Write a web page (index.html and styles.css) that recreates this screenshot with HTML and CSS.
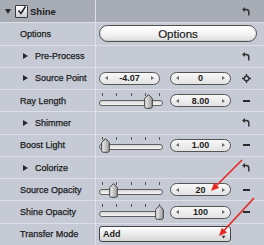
FILE: index.html
```html
<!DOCTYPE html>
<html>
<head>
<meta charset="utf-8">
<link rel="stylesheet" href="styles.css">
</head>
<body>
<div class="panel">
  <div class="row header">
    <div class="label">
      <span class="tri-down"></span>
      <span class="checkbox"><svg width="10" height="10" viewBox="0 0 10 10"><path d="M1.5 4.5 L4 7.5 L8.5 0.5" fill="none" stroke="#222" stroke-width="1.6"/></svg></span>
      <span class="title">Shine</span>
    </div>
    <div class="value"><div class="ctrl"></div><div class="icon"><svg class="reset" width="8" height="9" viewBox="0 0 8 9"><path d="M0 2.5 L3 0 L3 5 Z" fill="#333"/><path d="M2.5 2.5 H4.3 Q6.8 2.5 6.8 5 V8.5" fill="none" stroke="#333" stroke-width="1.5"/></svg></div></div>
  </div>

  <div class="row">
    <div class="label">Options</div>
    <div class="value"><button class="pill-btn">Options</button></div>
  </div>

  <div class="row">
    <div class="label"><span class="tri-right"></span>Pre-Process</div>
    <div class="value"><div class="ctrl"></div><div class="icon"><svg class="reset" width="8" height="9" viewBox="0 0 8 9"><path d="M0 2.5 L3 0 L3 5 Z" fill="#333"/><path d="M2.5 2.5 H4.3 Q6.8 2.5 6.8 5 V8.5" fill="none" stroke="#333" stroke-width="1.5"/></svg></div></div>
  </div>

  <div class="row">
    <div class="label"><span class="tri-right"></span>Source Point</div>
    <div class="value">
      <div class="ctrl">
        <div class="field"><span class="arr-l"></span><span class="num">-4.07</span><span class="arr-r"></span></div>
        <div class="field"><span class="arr-l"></span><span class="num">0</span><span class="arr-r"></span></div>
      </div>
      <div class="icon"><svg width="9" height="9" viewBox="0 0 9 9"><circle cx="4.5" cy="4.5" r="2.3" fill="none" stroke="#333" stroke-width="1.4"/><path d="M4.5 0 V2 M4.5 7 V9 M0 4.5 H2 M7 4.5 H9" stroke="#333" stroke-width="1.4"/></svg></div>
    </div>
  </div>

  <div class="row">
    <div class="label">Ray Length</div>
    <div class="value">
      <div class="ctrl">
        <div class="slider">
          <div class="ticks"><i></i><i></i><i></i><i></i><i></i></div>
          <div class="track"></div>
          <svg class="thumb" style="left:45px" width="9" height="15" viewBox="0 0 9 15"><defs><linearGradient id="tg1" x1="0" y1="0" x2="1" y2="0"><stop offset="0" stop-color="#f2f2f2"/><stop offset="1" stop-color="#9c9c9c"/></linearGradient></defs><path d="M4.5 0.6 L8.3 4.5 V12.5 Q8.3 14.3 6.5 14.3 H2.5 Q0.7 14.3 0.7 12.5 V4.5 Z" fill="url(#tg1)" stroke="#3e3e3e" stroke-width="1"/></svg>
        </div>
        <div class="field"><span class="arr-l"></span><span class="num">8.00</span><span class="arr-r"></span></div>
      </div>
      <div class="icon"><span class="minus"></span></div>
    </div>
  </div>

  <div class="row">
    <div class="label"><span class="tri-right"></span>Shimmer</div>
    <div class="value"><div class="ctrl"></div><div class="icon"><svg class="reset" width="8" height="9" viewBox="0 0 8 9"><path d="M0 2.5 L3 0 L3 5 Z" fill="#333"/><path d="M2.5 2.5 H4.3 Q6.8 2.5 6.8 5 V8.5" fill="none" stroke="#333" stroke-width="1.5"/></svg></div></div>
  </div>

  <div class="row">
    <div class="label">Boost Light</div>
    <div class="value">
      <div class="ctrl">
        <div class="slider">
          <div class="ticks"><i></i><i></i><i></i><i></i><i></i></div>
          <div class="track"></div>
          <svg class="thumb" style="left:2px" width="9" height="15" viewBox="0 0 9 15"><defs><linearGradient id="tg2" x1="0" y1="0" x2="1" y2="0"><stop offset="0" stop-color="#f2f2f2"/><stop offset="1" stop-color="#9c9c9c"/></linearGradient></defs><path d="M4.5 0.6 L8.3 4.5 V12.5 Q8.3 14.3 6.5 14.3 H2.5 Q0.7 14.3 0.7 12.5 V4.5 Z" fill="url(#tg2)" stroke="#3e3e3e" stroke-width="1"/></svg>
        </div>
        <div class="field"><span class="arr-l"></span><span class="num">1.00</span><span class="arr-r"></span></div>
      </div>
      <div class="icon"><span class="minus"></span></div>
    </div>
  </div>

  <div class="row">
    <div class="label"><span class="tri-right"></span>Colorize</div>
    <div class="value"><div class="ctrl"></div><div class="icon"><svg class="reset" width="8" height="9" viewBox="0 0 8 9"><path d="M0 2.5 L3 0 L3 5 Z" fill="#333"/><path d="M2.5 2.5 H4.3 Q6.8 2.5 6.8 5 V8.5" fill="none" stroke="#333" stroke-width="1.5"/></svg></div></div>
  </div>

  <div class="row">
    <div class="label">Source Opacity</div>
    <div class="value">
      <div class="ctrl">
        <div class="slider">
          <div class="ticks"><i></i><i></i><i></i><i></i><i></i></div>
          <div class="track"></div>
          <svg class="thumb" style="left:10px" width="9" height="15" viewBox="0 0 9 15"><defs><linearGradient id="tg3" x1="0" y1="0" x2="1" y2="0"><stop offset="0" stop-color="#f2f2f2"/><stop offset="1" stop-color="#9c9c9c"/></linearGradient></defs><path d="M4.5 0.6 L8.3 4.5 V12.5 Q8.3 14.3 6.5 14.3 H2.5 Q0.7 14.3 0.7 12.5 V4.5 Z" fill="url(#tg3)" stroke="#3e3e3e" stroke-width="1"/></svg>
        </div>
        <div class="field"><span class="arr-l"></span><span class="num">20</span><span class="arr-r"></span></div>
      </div>
      <div class="icon"><span class="minus"></span></div>
    </div>
  </div>

  <div class="row">
    <div class="label">Shine Opacity</div>
    <div class="value">
      <div class="ctrl">
        <div class="slider">
          <div class="ticks"><i></i><i></i><i></i><i></i><i></i></div>
          <div class="track"></div>
          <svg class="thumb" style="left:56px" width="9" height="15" viewBox="0 0 9 15"><defs><linearGradient id="tg4" x1="0" y1="0" x2="1" y2="0"><stop offset="0" stop-color="#f2f2f2"/><stop offset="1" stop-color="#9c9c9c"/></linearGradient></defs><path d="M4.5 0.6 L8.3 4.5 V12.5 Q8.3 14.3 6.5 14.3 H2.5 Q0.7 14.3 0.7 12.5 V4.5 Z" fill="url(#tg4)" stroke="#3e3e3e" stroke-width="1"/></svg>
        </div>
        <div class="field"><span class="arr-l"></span><span class="num">100</span><span class="arr-r"></span></div>
      </div>
      <div class="icon"><span class="minus"></span></div>
    </div>
  </div>

  <div class="row last">
    <div class="label">Transfer Mode</div>
    <div class="value">
      <div class="ctrl">
        <div class="popup"><span class="popup-text">Add</span><svg width="5" height="9" viewBox="0 0 5 9"><path d="M2.5 0.5 L4.5 3.3 H0.5 Z M2.5 8.5 L4.5 5.7 H0.5 Z" fill="#333"/></svg></div>
      </div>
      <div class="icon"></div>
    </div>
  </div>

  <svg class="annot" width="264" height="245" viewBox="0 0 264 245">
    <line x1="242" y1="160" x2="216" y2="186" stroke="#e8261f" stroke-width="1.6"/>
    <polygon points="211,191 219.2,187.8 214.2,182.8" fill="#e8261f"/>
    <line x1="254" y1="198" x2="224" y2="230.5" stroke="#e8261f" stroke-width="1.6"/>
    <polygon points="219,236 227,232.5 221.8,227.7" fill="#e8261f"/>
  </svg>
</div>
</body>
</html>
```

FILE: styles.css
```css
html, body {
  margin: 0;
  padding: 0;
  background: #c5cad5;
}

.panel {
  position: relative;
  width: 264px;
  height: 245px;
  display: grid;
  grid-template-rows: repeat(11, 1fr);
  background: #c5cad5;
  font-family: "Liberation Sans", Arial, sans-serif;
  color: #1c1c1c;
  overflow: hidden;
}

.row {
  display: flex;
  border-top: 1px solid #dde0e7;
  min-height: 0;
}

.row.header {
  background: #a8acb5;
  border-top: none;
}

.label {
  width: 96px;
  flex: none;
  border-right: 1px solid #dde0e7;
  display: flex;
  align-items: center;
  padding-left: 20px;
  box-sizing: border-box;
  font-size: 9px;
  white-space: nowrap;
  -webkit-text-stroke: 0.25px #1c1c1c;
}

.header .label {
  padding-left: 5px;
}

.value {
  flex: 1;
  display: flex;
  align-items: center;
  padding-left: 3px;
  min-width: 0;
}

.ctrl {
  width: 132px;
  flex: none;
  display: flex;
  align-items: center;
  justify-content: space-between;
}

.icon {
  width: 30px;
  flex: none;
  display: flex;
  align-items: center;
  justify-content: center;
}

/* header */
.tri-down {
  width: 0;
  height: 0;
  border-left: 3px solid transparent;
  border-right: 3px solid transparent;
  border-top: 5px solid #2a2a2a;
  margin-right: 4px;
}

.checkbox {
  width: 11px;
  height: 11px;
  border: 1px solid #3a3a3a;
  border-radius: 1px;
  background: linear-gradient(#ffffff, #c9ccd2);
  display: flex;
  align-items: center;
  justify-content: center;
  margin-right: 2px;
}

.title {
  font-weight: bold;
  font-size: 9.5px;
  -webkit-text-stroke: 0;
}

.tri-right {
  width: 0;
  height: 0;
  border-top: 3px solid transparent;
  border-bottom: 3px solid transparent;
  border-left: 5px solid #2a2a2a;
  margin-left: 3px;
  margin-right: 7px;
}

/* options button */
.pill-btn {
  width: 158px;
  height: 17px;
  margin: 0;
  padding: 0;
  border: 1px solid #4e4e4e;
  border-radius: 9px;
  background: linear-gradient(#ffffff 0%, #f4f4f4 50%, #dedede 100%);
  box-shadow: inset 0 -1px 1px rgba(0,0,0,0.08);
  font-family: "Liberation Sans", Arial, sans-serif;
  font-size: 11.5px;
  color: #1c1c1c;
  -webkit-text-stroke: 0.2px #1c1c1c;
  display: flex;
  align-items: center;
  justify-content: center;
}

/* number field */
.field {
  width: 61px;
  height: 13px;
  box-sizing: border-box;
  border: 1px solid #555;
  border-radius: 7px;
  background: linear-gradient(#f8f8f8, #e3e3e3);
  display: flex;
  align-items: center;
  padding: 0 5px;
}

.num {
  flex: 1;
  text-align: center;
  font-size: 9px;
  font-weight: bold;
  line-height: 10px;
}

.arr-l {
  width: 0;
  height: 0;
  border-top: 2.5px solid transparent;
  border-bottom: 2.5px solid transparent;
  border-right: 3px solid #6a6a6a;
}

.arr-r {
  width: 0;
  height: 0;
  border-top: 2.5px solid transparent;
  border-bottom: 2.5px solid transparent;
  border-left: 3px solid #6a6a6a;
}

/* slider */
.slider {
  position: relative;
  width: 64px;
  height: 16px;
}

.ticks {
  display: flex;
  justify-content: space-between;
  padding: 0 3px;
  height: 3px;
}

.ticks i {
  display: block;
  width: 1px;
  height: 3px;
  background: #555;
}

.track {
  margin-top: 4px;
  height: 4px;
  border: 1px solid #5f5f5f;
  border-radius: 3px;
  background: linear-gradient(#d8d8d8, #f6f6f6);
}

.thumb {
  position: absolute;
  top: 1px;
}

.minus {
  display: block;
  width: 7px;
  height: 2px;
  background: #2a2a2a;
}

/* popup */
.popup {
  width: 132px;
  height: 16px;
  box-sizing: border-box;
  border: 1px solid #444;
  border-radius: 3px;
  background: linear-gradient(#ffffff, #e6e6e6 60%, #d6d6d6);
  display: flex;
  align-items: center;
  justify-content: space-between;
  padding: 0 4px 0 3px;
}

.popup-text {
  font-size: 9px;
  font-weight: bold;
}

.annot {
  position: absolute;
  left: 0;
  top: 0;
  pointer-events: none;
}
```
